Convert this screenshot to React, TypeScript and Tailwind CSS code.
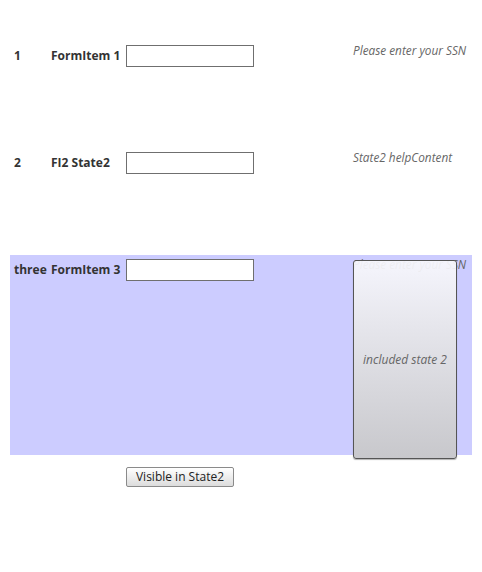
import React from 'react';

const font = { fontFamily: '"Open Sans", "Noto Sans", sans-serif' };

function Row({ num, label, help, shaded, children }: { num: string; label: string; help: string; shaded?: boolean; children?: React.ReactNode }) {
  return (
    <div className={`relative flex ${shaded ? 'h-[200px] bg-[#ccccff]' : 'h-[107px]'}`}>
      <div className="flex items-start pt-[4px] pl-[4px]">
        <div className="w-[37px] h-[22px] flex items-center text-[12px] font-bold text-[#333]">{num}</div>
        <div className="w-[75px] h-[22px] flex items-center text-[12px] font-bold text-[#333] whitespace-nowrap">{label}</div>
        <input className="w-[128px] h-[22px] border border-[#6f6f6f] bg-white outline-none" />
      </div>
      <div className="ml-auto w-[119px] pt-[1px] text-[11.8px] italic text-[#666] leading-[16px] whitespace-nowrap">{help}</div>
      {children}
    </div>
  );
}

export default function App() {
  return (
    <div className="w-[482px] h-[572px] bg-white" style={font}>
      <div className="pt-[41px] pl-[10px] w-[472px]">
        <Row num="1" label="FormItem 1" help="Please enter your SSN" />
        <Row num="2" label="FI2 State2" help="State2 helpContent" />
        <Row num="three" label="FormItem 3" help="Please enter your SSN" shaded>
          <div className="absolute left-[343px] top-[5px] w-[104px] h-[199px] rounded-[3px] border border-[#555] bg-gradient-to-b from-[#f8f8fcee] to-[#c8c8cc] flex items-center justify-center text-[12px] italic text-[#666] shadow-[0_1px_1px_rgba(0,0,0,0.3)]">
            included state 2
          </div>
        </Row>
        <div className="flex pt-[12px] pl-[116px]">
          <button className="w-[108px] h-[20px] rounded-[2px] border border-[#8a8a8a] bg-gradient-to-b from-white to-[#dcdcdc] text-[12px] text-[#222] leading-none">
            Visible in State2
          </button>
        </div>
      </div>
    </div>
  );
}
